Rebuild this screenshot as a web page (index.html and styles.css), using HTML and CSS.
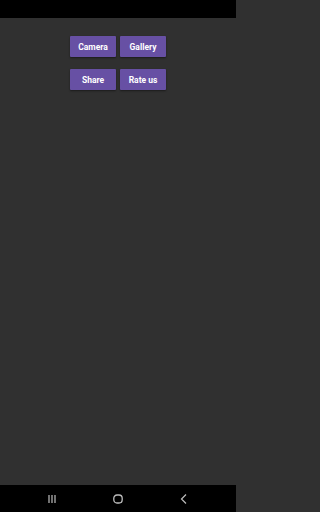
FILE: index.html
```html
<!DOCTYPE html>
<html>
<head>
<meta charset="utf-8">
<meta name="viewport" content="width=device-width, initial-scale=1">
<link rel="stylesheet" href="styles.css">
</head>
<body>
<div class="screen">
  <div class="status"></div>
  <main class="content">
    <div class="row">
      <button class="btn">Camera</button>
      <button class="btn">Gallery</button>
    </div>
    <div class="row">
      <button class="btn">Share</button>
      <button class="btn">Rate us</button>
    </div>
  </main>
  <nav class="navbar">
    <svg class="nav-icon" width="12" height="12" viewBox="0 0 12 12"><path d="M3 2v8M6 2v8M9 2v8" stroke="#bdbdbd" stroke-width="1.2" fill="none"/></svg>
    <svg class="nav-icon" width="12" height="12" viewBox="0 0 12 12"><rect x="1.8" y="2" width="8.4" height="8" rx="3.2" stroke="#bdbdbd" stroke-width="1.3" fill="none"/></svg>
    <svg class="nav-icon" width="12" height="12" viewBox="0 0 12 12"><path d="M8 1.5L3.5 6L8 10.5" stroke="#bdbdbd" stroke-width="1.2" fill="none"/></svg>
  </nav>
</div>
</body>
</html>
```
FILE: styles.css
```css
html, body {
  margin: 0;
  padding: 0;
  background: #303030;
}
.screen {
  width: 236px;
  height: 512px;
  display: flex;
  flex-direction: column;
  font-family: Roboto, "Liberation Sans", sans-serif;
}
.status {
  height: 18px;
  background: #000;
}
.content {
  flex: 1;
  background: #303030;
  display: flex;
  flex-direction: column;
  align-items: center;
  padding-top: 18px;
  gap: 12px;
}
.row {
  display: flex;
  gap: 4px;
}
.btn {
  width: 46px;
  height: 21px;
  padding: 0;
  border: none;
  border-radius: 1px;
  background: #6750a4;
  color: #fff;
  font-family: Roboto, "Liberation Sans", sans-serif;
  font-size: 8.5px;
  font-weight: 700;
  box-shadow: 0 1px 2px rgba(0,0,0,0.45);
}
.navbar {
  height: 27px;
  background: #000;
  display: flex;
  align-items: center;
  justify-content: space-between;
  padding: 0 46px;
}
```
